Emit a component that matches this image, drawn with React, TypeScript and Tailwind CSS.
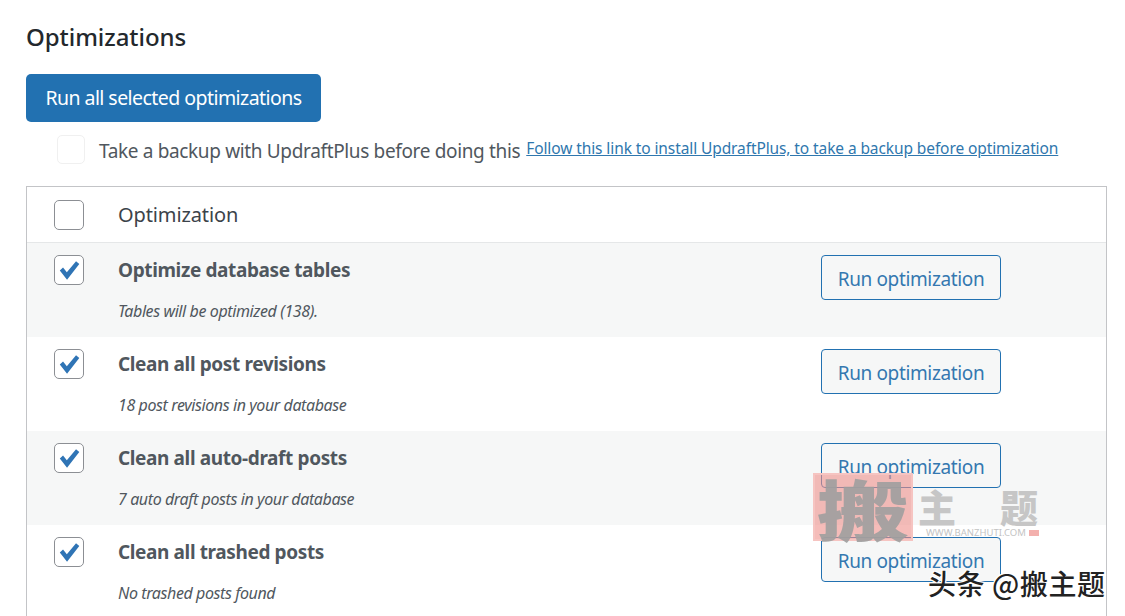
const rows = [
  { title: "Optimize database tables", note: "Tables will be optimized (138).", shaded: true },
  { title: "Clean all post revisions", note: "18 post revisions in your database", shaded: false },
  { title: "Clean all auto-draft posts", note: "7 auto draft posts in your database", shaded: true },
  { title: "Clean all trashed posts", note: "No trashed posts found", shaded: false },
];

function Checkbox({ checked = false }: { checked?: boolean }) {
  return (
    <span className="flex h-[30px] w-[30px] shrink-0 items-center justify-center rounded-[5px] border border-[#8c8f94] bg-white">
      {checked && (
        <svg viewBox="0 0 24 24" className="h-[26px] w-[26px]" aria-hidden>
          <path d="M3.5 12.5 L6.5 9.8 L10 14 L18.5 4 L21.5 6.5 L10.2 21 Z" fill="#2f74b5" />
        </svg>
      )}
    </span>
  );
}

export default function App() {
  return (
    <div className="relative h-[616px] w-[1125px] overflow-hidden bg-white pl-[26px] pr-[18px] font-['Noto_Sans',sans-serif]">
      <h2 className="pt-[21px] text-[24px] leading-[32px] font-medium tracking-[-0.05px] text-[#23282d]">
        Optimizations
      </h2>
      <button className="mt-[21px] flex h-[48px] w-[295px] items-center justify-center rounded-[5px] bg-[#2271b1] text-[19.5px] tracking-[-0.55px] text-white">
        Run all selected optimizations
      </button>
      <div className="mt-[13px] flex h-[28px] items-center pl-[31px]">
        <span className="h-[29px] w-[28px] rounded-[5px] border border-[#f0f0f0] bg-white" />
        <span className="ml-[14px] translate-y-[2px] text-[19px] tracking-[-0.35px] text-[#50575e]">
          Take a backup with UpdraftPlus before doing this
        </span>
        <a className="ml-[6px] text-[15.5px] tracking-[-0.1px] text-[#2f77ae] underline">
          Follow this link to install UpdraftPlus, to take a backup before optimization
        </a>
      </div>
      <div className="mt-[23px] border border-b-0 border-[#c3c4c7]">
        <div className="flex h-[56px] items-center border-b border-[#e5e7e8] pl-[27px]">
          <Checkbox />
          <span className="ml-[34px] text-[20px] tracking-[-0.12px] text-[#3c434a]">Optimization</span>
        </div>
        {rows.map((row) => (
          <div
            key={row.title}
            className={`flex h-[94px] items-start pl-[27px] ${row.shaded ? "bg-[#f6f7f7]" : "bg-white"}`}
          >
            <div className="pt-[12px]">
              <Checkbox checked />
            </div>
            <div className="ml-[34px] flex-1">
              <div className="pt-[12px] text-[19px] leading-[30px] font-bold tracking-[-0.38px] text-[#50575e]">
                {row.title}
              </div>
              <div className="mt-[14px] text-[16px] leading-[24px] tracking-[-0.4px] text-[#50575e] italic">
                {row.note}
              </div>
            </div>
            <button className="mt-[12px] mr-[105px] flex h-[45px] w-[180px] items-center justify-center rounded-[4px] border border-[#2271b1] bg-[#f6f7f7] pt-[4px] text-[19px] tracking-[-0.37px] text-[#3478b0]">
              Run optimization
            </button>
          </div>
        ))}
      </div>

      {/* watermark */}
      <div className="pointer-events-none absolute top-[473px] left-[813px] flex h-[68px] w-[100px] items-center justify-center border-2 border-[#f6c4c1] bg-[#ef8f8a]/60 font-['Noto_Sans_CJK_SC',sans-serif] text-[66px] leading-none font-black text-[#9f9f9f]/90">
        <span className="scale-x-[1.4]">搬</span>
      </div>
      <div className="pointer-events-none absolute top-[484px] left-[918px] flex w-[120px] justify-between font-['Noto_Sans_CJK_SC',sans-serif] text-[38px] leading-[44px] font-black text-[#c6c6c6]">
        <span>主</span>
        <span>题</span>
      </div>
      <div className="pointer-events-none absolute top-[527px] left-[926px] flex items-center gap-[3px] text-[9.5px] leading-[12px] text-[#c4c4c4]">
        WWW.BANZHUTI.COM
        <span className="h-[6px] w-[10px] bg-[#f3b0ad]" />
      </div>
      <div className="pointer-events-none absolute top-[564px] left-[928px] font-['Noto_Sans_CJK_SC',sans-serif] text-[28px] leading-[38px] font-medium tracking-[0.6px] text-[#222] [text-shadow:1px_1px_0_#fff,-1px_-1px_0_#fff,1px_-1px_0_#fff,-1px_1px_0_#fff]">
        头条 @搬主题
      </div>
    </div>
  );
}
